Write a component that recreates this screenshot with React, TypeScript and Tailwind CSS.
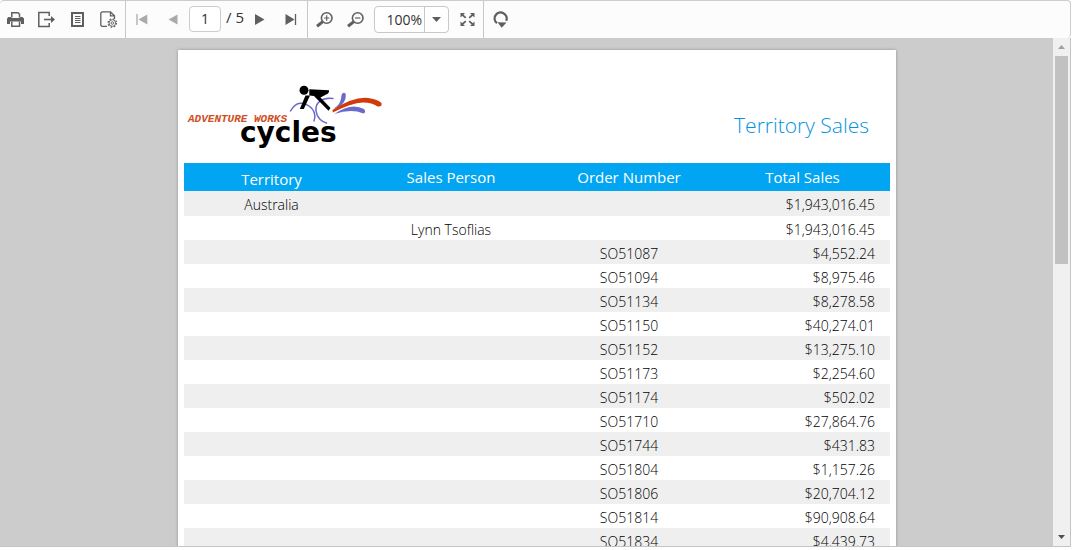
import React from "react";

const orders: [string, string][] = [
  ["SO51087", "$4,552.24"],
  ["SO51094", "$8,975.46"],
  ["SO51134", "$8,278.58"],
  ["SO51150", "$40,274.01"],
  ["SO51152", "$13,275.10"],
  ["SO51173", "$2,254.60"],
  ["SO51174", "$502.02"],
  ["SO51710", "$27,864.76"],
  ["SO51744", "$431.83"],
  ["SO51804", "$1,157.26"],
  ["SO51806", "$20,704.12"],
  ["SO51814", "$90,908.64"],
  ["SO51834", "$4,439.73"],
];

function ToolButton({ label, disabled, children }: { label: string; disabled?: boolean; children: React.ReactNode }) {
  return (
    <button
      type="button"
      aria-label={label}
      disabled={disabled}
      className="flex h-full w-[31px] shrink-0 items-center justify-center text-[#5f5f5f] disabled:text-[#aaaaaa]"
    >
      <svg width="17" height="17" viewBox="0 0 17 17" fill="none" stroke="currentColor" aria-hidden="true">
        {children}
      </svg>
    </button>
  );
}

function Group({ children, last }: { children: React.ReactNode; last?: boolean }) {
  return (
    <div className={last ? "flex h-full items-center pl-px" : "flex h-full items-center border-r border-[#c8c8c8]"}>
      {children}
    </div>
  );
}

function Toolbar() {
  return (
    <div
      role="toolbar"
      aria-label="Report viewer"
      className="flex h-[38px] shrink-0 items-center rounded border-t border-r border-[#cccccc] bg-[#fcfcfc]"
    >
      <Group>
        <ToolButton label="Print">
          <path d="M4.800 6.500V1.800h6.200l1.500 1.500v3.200" strokeWidth="1.500" />
          <path d="M1.500 6H4v1h9V6h2.500L17 7.500V13h-3v-2.500H3V13H0V7.500z" fill="currentColor" stroke="none" />
          <path d="M4.800 10.500v4.800h7.700v-4.800" strokeWidth="1.500" />
        </ToolButton>
        <ToolButton label="Export">
          <path d="M11.200 5V1.500H.8v14h10.400V12" strokeWidth="1.500" />
          <path d="M6 8.500h8" strokeWidth="1.600" />
          <path d="M13 5l4 3.500-4 3.500z" fill="currentColor" stroke="none" />
        </ToolButton>
        <ToolButton label="Print layout">
          <path d="M3 2h11v13H3z" strokeWidth="2" />
          <path d="M6 5.500h5.500M6 7.500h5.500M6 9.500h5.500M6 11.500h5.500" />
        </ToolButton>
        <ToolButton label="Page setup">
          <path d="M7 15.400H2L.8 14.200V2L2 .8h8.500l4 4V8M10.500.8v4h4" strokeWidth="1.300" />
          <circle cx="12.300" cy="12" r="3.300" strokeWidth="0.900" />
          <circle cx="12.300" cy="12" r="4.200" strokeWidth="1.200" strokeDasharray="1.600 1.700" />
          <circle cx="12.300" cy="12" r="1.300" strokeWidth="0.900" />
        </ToolButton>
        <div className="w-px" />
      </Group>
      <Group>
        <ToolButton label="First page" disabled>
          <path d="M4 3v11" strokeWidth="1.300" />
          <path d="M14.300 3.500v10L5.500 8.500z" fill="currentColor" stroke="none" />
        </ToolButton>
        <ToolButton label="Previous page" disabled>
          <path d="M13.500 3.500v10l-9-5z" fill="currentColor" stroke="none" />
        </ToolButton>
        <input
          aria-label="Current page"
          defaultValue="1"
          className="ml-px mb-[2px] h-[26px] w-[32px] rounded border border-[#cccccc] bg-white text-center text-sm text-[#333333] outline-none"
        />
        <span className="w-[24px] pb-[4px] pl-[5px] text-[15px] whitespace-nowrap text-[#333333]">/ 5</span>
        <ToolButton label="Next page">
          <path d="M3 3v11l9.500-5.500z" fill="currentColor" stroke="none" />
        </ToolButton>
        <ToolButton label="Last page">
          <path d="M2.500 3v11l9-5.500z" fill="currentColor" stroke="none" />
          <path d="M12.500 3v11" strokeWidth="1.300" />
        </ToolButton>
      </Group>
      <Group>
        <div className="w-px" />
        <ToolButton label="Zoom in">
          <circle cx="10.700" cy="7" r="5.300" strokeWidth="1.600" />
          <path d="M10.700 4.300v5.400M8 7h5.400" strokeWidth="1.200" />
          <path d="M6.800 10.600L1 15.200" strokeWidth="3" />
        </ToolButton>
        <ToolButton label="Zoom out">
          <circle cx="10.700" cy="7" r="5.300" strokeWidth="1.600" />
          <path d="M8 7h5.400" strokeWidth="1.200" />
          <path d="M6.800 10.600L1 15.200" strokeWidth="3" />
        </ToolButton>
        <div className="ml-[3px] flex h-[27px] w-[75px] rounded border border-[#c8c8c8] bg-white">
          <input
            aria-label="Zoom level"
            defaultValue="100%"
            className="w-[49px] min-w-0 bg-transparent pr-[2px] text-right text-sm text-[#333333] outline-none"
          />
          <button
            type="button"
            aria-label="Choose zoom level"
            className="flex flex-1 items-center justify-center border-l border-[#c8c8c8] text-[#5f5f5f]"
          >
            <svg width="9" height="5" viewBox="0 0 9 5" fill="currentColor" aria-hidden="true">
              <path d="M0 0h9L4.500 5z" />
            </svg>
          </button>
        </div>
        <div className="w-[3px]" />
        <ToolButton label="Fit to page">
          <path d="M3 3.500l3.800 3.300M14 3.500l-3.800 3.300M3 13.500l3.800-3.300M14 13.500l-3.800-3.300" strokeWidth="1.700" />
          <path
            d="M1.500 2H6L1.500 6.500zM15.500 2H11l4.500 4.500zM1.500 15H6l-4.500-4.500zM15.500 15H11l4.500-4.500z"
            fill="currentColor"
            stroke="none"
          />
        </ToolButton>
      </Group>
      <Group last>
        <ToolButton label="Refresh">
          <path d="M5 12.200A6 6 0 1 1 14.200 9.800" strokeWidth="2.300" />
          <path d="M5.500 11.300l9 .2-4.800 5.200z" fill="currentColor" stroke="none" />
        </ToolButton>
      </Group>
    </div>
  );
}

function Logo() {
  return (
    <svg width="202" height="72" viewBox="0 0 202 72" role="img" aria-label="Adventure Works Cycles">
      <g fill="none" stroke="#6a6acb" strokeLinecap="round">
        <path d="M106.500 31C112 21 120 22 125 26C131 30 132 37 130 41" strokeWidth="1.500" />
        <path d="M149 18.500C138 17 131 23 132 31C133 38 138 42 142.500 43" strokeWidth="1.500" />
      </g>
      <g fill="#6a6acb">
        <path d="M149.500 28.500C156 25.500 157 20 157.500 15Q159 11.500 161.500 13.500C163 19 159 27 149.500 28.500z" />
        <path d="M150.500 34Q167 22 180 29Q182.500 32 179.500 33.500Q167 28.500 150.500 34z" />
      </g>
      <path
        d="M148.500 30Q172 15 187 18.500Q194 19.500 197.500 23Q198.500 27 193.500 26.500Q188 22.500 179 22.500Q167 23 148.800 32.500z"
        fill="#d13b0a"
      />
      <circle cx="120" cy="10.200" r="4.500" />
      <path d="M125.300 9.300L145 10.200Q145.500 12 144 13.500L136.500 17.500L146.500 28L144.500 30.800L130 16L125.300 15.500z" />
      <path d="M121.500 15.500h4.500L119.800 29h-4z" />
      <text x="4" y="42" fill="#d0501f" className="font-['Liberation_Mono'] text-[11px] font-bold italic">
        ADVENTURE WORKS
      </text>
      <text x="56" y="62" className="font-['DejaVu_Sans'] text-[28px] font-bold">
        cycles
      </text>
    </svg>
  );
}

function Row({ cells, tall }: { cells: string[]; tall?: boolean }) {
  return (
    <tr className="odd:bg-[#efefef]">
      {cells.map((cell, i) => (
        <td key={i} className={i === 3 ? "p-0 pr-[15px] text-right" : "p-0 text-center"}>
          <div className={tall ? "h-[25px] pt-[3px] leading-[21px]" : "h-[24px] pt-[3px] leading-[21px]"}>{cell}</div>
        </td>
      ))}
    </tr>
  );
}

function ReportPage() {
  return (
    <article className="w-[718px] shrink-0 bg-white px-[6px] shadow-[0_0_3px_rgba(0,0,0,0.3)]">
      <header className="flex h-[113px] justify-between">
        <div className="pt-[30px]">
          <Logo />
        </div>
        <h1 className="pt-[61px] pr-[21px] text-[21px] leading-[28px] font-light text-[#0093e0]">Territory Sales</h1>
      </header>
      <table className="w-full table-fixed border-collapse text-sm font-light text-black">
        <colgroup>
          <col className="w-[175px]" />
          <col className="w-[184px]" />
          <col className="w-[172px]" />
          <col className="w-[175px]" />
        </colgroup>
        <thead>
          <tr className="h-[28px] bg-[#02a5f1] text-[15px] leading-[24px] text-white">
            <th className="p-0 pt-[4px] font-normal">Territory</th>
            <th className="p-0 font-normal">Sales Person</th>
            <th className="p-0 font-normal">Order Number</th>
            <th className="p-0 font-normal">Total Sales</th>
          </tr>
        </thead>
        <tbody>
          <Row tall cells={["Australia", "", "", "$1,943,016.45"]} />
          <Row cells={["", "Lynn Tsoflias", "", "$1,943,016.45"]} />
          {orders.map(([id, total]) => (
            <Row key={id} cells={["", "", id, total]} />
          ))}
        </tbody>
      </table>
    </article>
  );
}

function Scrollbar() {
  return (
    <div className="flex w-[17px] shrink-0 flex-col items-center bg-[#f0f0f0]">
      <button type="button" aria-label="Scroll up" className="flex h-[18px] w-full items-center justify-center text-[#a0a0a0]">
        <svg width="7" height="4" viewBox="0 0 7 4" fill="currentColor" aria-hidden="true">
          <path d="M0 4h7L3.500 0z" />
        </svg>
      </button>
      <div className="flex w-full flex-1 justify-center">
        <div className="h-[44%] w-[13px] bg-[#c1c1c1]" />
      </div>
      <button type="button" aria-label="Scroll down" className="flex h-[18px] w-full items-center justify-center text-[#505050]">
        <svg width="7" height="4" viewBox="0 0 7 4" fill="currentColor" aria-hidden="true">
          <path d="M0 0h7L3.500 4z" />
        </svg>
      </button>
    </div>
  );
}

export default function App() {
  return (
    <div className="h-screen bg-white pr-[3px] pb-[3px] font-['Open_Sans','Noto_Sans',sans-serif]">
      <div className="flex h-full flex-col">
        <Toolbar />
        <main className="flex min-h-0 flex-1 border-r border-b border-[#c4c4c4] bg-[#cccccc]">
          <div className="flex min-w-0 flex-1 items-start justify-center overflow-hidden pt-[12px] pl-[21px]">
            <ReportPage />
          </div>
          <Scrollbar />
        </main>
      </div>
    </div>
  );
}
